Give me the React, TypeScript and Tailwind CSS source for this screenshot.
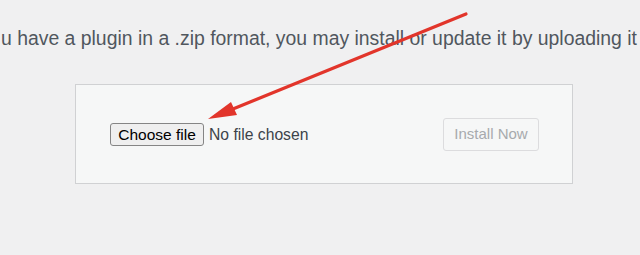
import React from "react";

export default function App() {
  return (
    <div className="relative w-[640px] h-[255px] overflow-hidden bg-[#f0f0f1] font-['Liberation_Sans',Arial,sans-serif]">
      <div className="pt-[26px] whitespace-nowrap text-[19.4px] leading-[25px] text-[#50575e] pl-[1px]">
        u have a plugin in a .zip format, you may install or update it by uploading it
      </div>
      <div className="ml-[75px] mt-[33px] w-[498px] h-[100px] border border-[#d0d1d3] bg-[#f6f7f7] flex items-center justify-between pl-[34px] pr-[33px]">
        <div className="flex items-center mt-[1px]">
          <button className="h-[23px] w-[94px] rounded-[3px] border border-[#858585] bg-[#efefef] text-[15.5px] leading-none text-black flex items-center justify-center">
            Choose file
          </button>
          <span className="ml-[5px] text-[15.7px] text-[#3c434a]">No file chosen</span>
        </div>
        <button className="h-[33px] w-[96px] rounded-[3px] border border-[#dcdcde] bg-[#f6f7f7] text-[15px] text-[#a7aaad] flex items-center justify-center">
          Install Now
        </button>
      </div>
      <svg className="absolute left-0 top-0 pointer-events-none" width="640" height="255" viewBox="0 0 640 255">
        <line x1="466" y1="14" x2="228" y2="111" stroke="#e2352b" strokeWidth="3.2" strokeLinecap="round" />
        <polygon points="208,119 231,102 237,115" fill="#e2352b" />
      </svg>
    </div>
  );
}
